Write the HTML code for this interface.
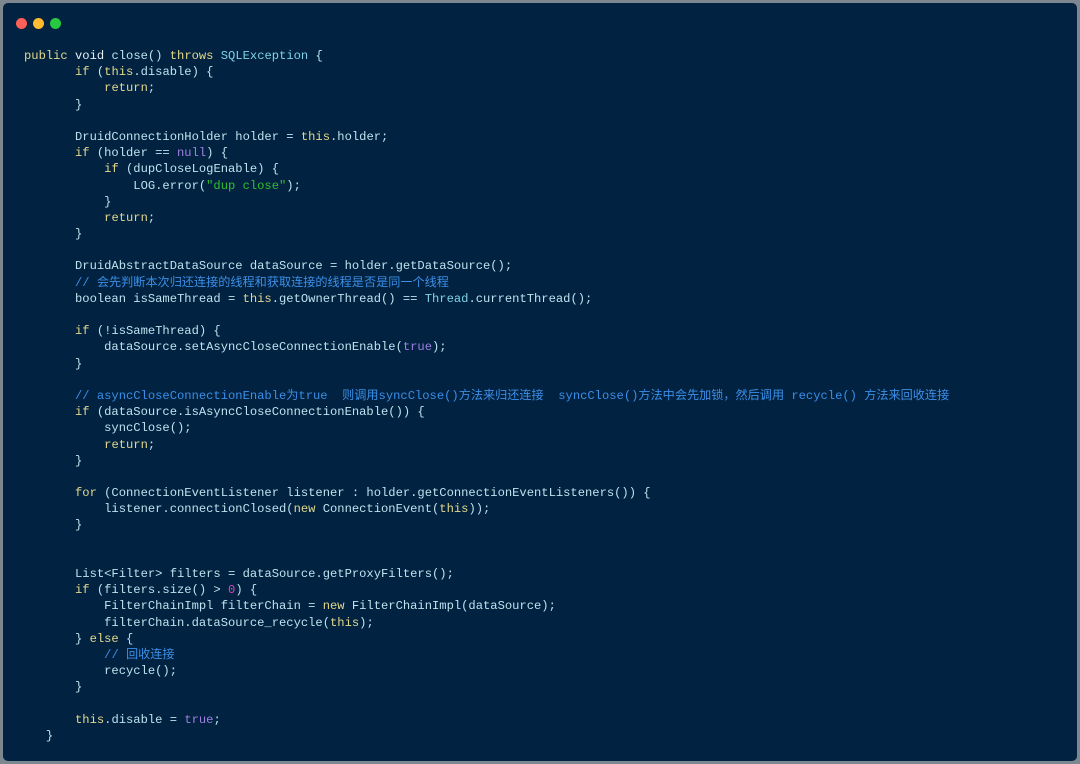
<!DOCTYPE html>
<html><head><meta charset="utf-8"><style>
html,body{margin:0;padding:0;background:#7d8790;}
body{width:1080px;height:764px;position:relative;overflow:hidden;}
.win{position:absolute;left:3px;top:3px;width:1074px;height:758px;background:#012240;border-radius:5px;}
.d{position:absolute;top:15px;width:11px;height:11px;border-radius:50%;}
pre{position:absolute;left:21px;top:45px;margin:0;font-family:"Liberation Mono","Noto Sans CJK SC",monospace;font-size:12.15px;line-height:16.19px;color:#bde3ee;}
.k{color:#e3d88c}.t{color:#7fd3e6}.c{color:#3b8fe8}.s{color:#2fbf2f}.n{color:#e044c4}.p{color:#9d80e2}.w{color:#e6eef2}
</style></head><body><div class="win">
<div class="d" style="left:13px;background:#fe5f57"></div>
<div class="d" style="left:30px;background:#febc2e"></div>
<div class="d" style="left:47px;background:#28c840"></div>
<pre><span class="k">public</span> <span class="w">void</span> close() <span class="k">throws</span> <span class="t">SQLException</span> {
       <span class="k">if</span> (<span class="k">this</span>.disable) {
           <span class="k">return</span>;
       }

       DruidConnectionHolder holder = <span class="k">this</span>.holder;
       <span class="k">if</span> (holder == <span class="p">null</span>) {
           <span class="k">if</span> (dupCloseLogEnable) {
               LOG.error(<span class="s">"dup close"</span>);
           }
           <span class="k">return</span>;
       }

       DruidAbstractDataSource dataSource = holder.getDataSource();
       <span class="c">// 会先判断本次归还连接的线程和获取连接的线程是否是同一个线程</span>
       boolean isSameThread = <span class="k">this</span>.getOwnerThread() == <span class="t">Thread</span>.currentThread();

       <span class="k">if</span> (!isSameThread) {
           dataSource.setAsyncCloseConnectionEnable(<span class="p">true</span>);
       }

       <span class="c">// asyncCloseConnectionEnable为true  则调用syncClose()方法来归还连接  syncClose()方法中会先加锁，然后调用 recycle() 方法来回收连接</span>
       <span class="k">if</span> (dataSource.isAsyncCloseConnectionEnable()) {
           syncClose();
           <span class="k">return</span>;
       }

       <span class="k">for</span> (ConnectionEventListener listener : holder.getConnectionEventListeners()) {
           listener.connectionClosed(<span class="k">new</span> ConnectionEvent(<span class="k">this</span>));
       }


       List&lt;Filter&gt; filters = dataSource.getProxyFilters();
       <span class="k">if</span> (filters.size() &gt; <span class="n">0</span>) {
           FilterChainImpl filterChain = <span class="k">new</span> FilterChainImpl(dataSource);
           filterChain.dataSource_recycle(<span class="k">this</span>);
       } <span class="k">else</span> {
           <span class="c">// 回收连接</span>
           recycle();
       }

       <span class="k">this</span>.disable = <span class="p">true</span>;
   }</pre>
</div></body></html>
